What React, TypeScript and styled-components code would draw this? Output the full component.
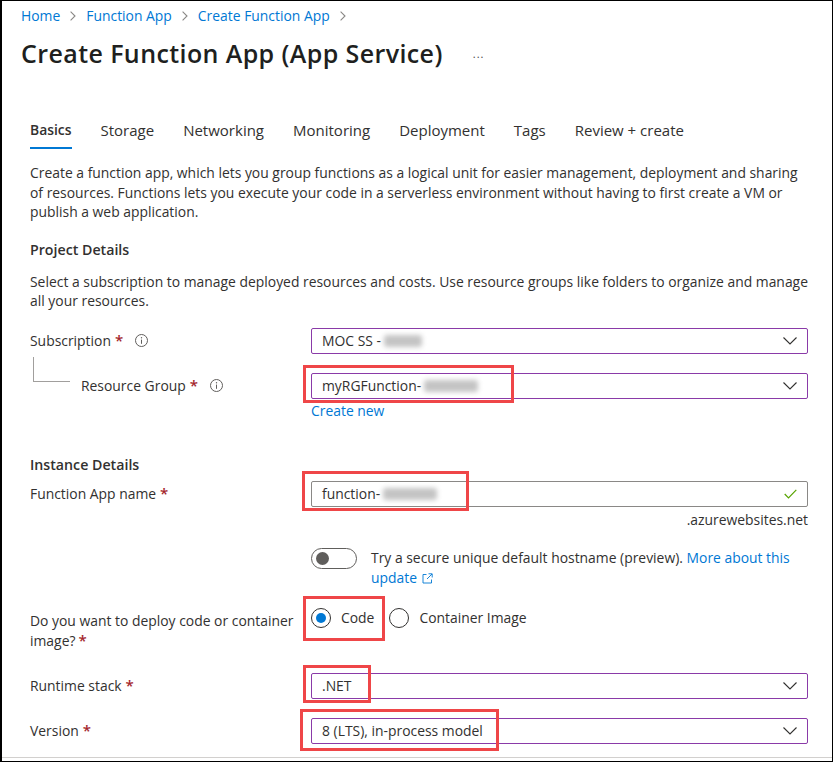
import React from "react";
import styled, { createGlobalStyle } from "styled-components";

const GlobalStyle = createGlobalStyle`
  html, body {
    margin: 0;
    padding: 0;
    background: #ffffff;
  }
  body {
    font-family: "Open Sans", Lato, sans-serif;
    font-size: 13.9px;
    color: #323130;
  }
  * {
    box-sizing: border-box;
  }
`;

const Frame = styled.div`
  width: 833px;
  height: 762px;
  border: 1px solid #000;
  border-left-width: 2px;
  display: flex;
  flex-direction: column;
  overflow: hidden;
`;

const Header = styled.header`
  padding-left: 19px;
`;

const Breadcrumb = styled.nav`
  display: flex;
  align-items: center;
  height: 20px;
  margin-top: 5px;
  gap: 10px;
`;

const Crumb = styled.a`
  color: #0078d4;
  text-decoration: none;
  line-height: 20px;
`;

const TitleRow = styled.div`
  display: flex;
  align-items: center;
  margin-top: 11px;
  height: 32px;
`;

const Title = styled.h1`
  margin: 0;
  font-size: 25px;
  font-weight: 600;
  letter-spacing: 0.4px;
  line-height: 32px;
  color: #201f1e;
`;

const More = styled.span`
  margin-left: 30px;
  color: #484644;
  font-size: 11px;
  letter-spacing: 1px;
  line-height: 12px;
  padding-top: 2px;
`;

const Content = styled.main`
  flex: 1;
  padding: 0 24px 0 28px;
  overflow: hidden;
`;

const Tabs = styled.div`
  display: flex;
  align-items: flex-end;
  gap: 29px;
  margin-top: 51px;
`;

const Tab = styled.div<{ $active?: boolean }>`
  line-height: 20px;
  padding-bottom: 7px;
  font-size: ${(p) => (p.$active ? 13.9 : 15)}px;
  font-weight: ${(p) => (p.$active ? 600 : 400)};
  color: #323130;
  border-bottom: 2px solid ${(p) => (p.$active ? "#0078d4" : "transparent")};
`;

const Text = styled.p<{ $mt: number }>`
  margin: ${(p) => p.$mt}px 0 0;
  line-height: 19.6px;
`;

const SectionTitle = styled.h3<{ $mt: number }>`
  margin: ${(p) => p.$mt}px 0 0;
  font-size: 14.2px;
  font-weight: 600;
  line-height: 20px;
`;

const Row = styled.div<{ $mt: number; $top?: boolean }>`
  display: grid;
  grid-template-columns: 281px 1fr;
  align-items: ${(p) => (p.$top ? "start" : "center")};
  margin-top: ${(p) => p.$mt}px;
`;

const Label = styled.div`
  display: flex;
  align-items: center;
  line-height: 20px;
`;

const TreeLabel = styled(Label)`
  height: 26px;
`;

const WrapLabel = styled.div`
  line-height: 20px;
  padding-top: 3px;
  padding-right: 12px;
`;

const Connector = styled.span`
  align-self: flex-start;
  width: 37px;
  height: 25px;
  margin: -16px 11px 0 3px;
  border-left: 1px solid #a19f9d;
  border-bottom: 1px solid #a19f9d;
`;

const Required = styled.span<{ $gap?: number }>`
  color: #a4262c;
  margin-left: ${(p) => p.$gap ?? 4}px;
  font-size: 15px;
  line-height: 1;
  font-weight: 600;
`;

const Info = styled.svg`
  margin-left: 12px;
  width: 13px;
  height: 13px;
`;

const Control = styled.div`
  position: relative;
`;

const Field = styled.div<{ $purple?: boolean }>`
  height: 26px;
  display: flex;
  align-items: center;
  padding: 0 10px;
  border: 1px solid ${(p) => (p.$purple ? "#8a3aa8" : "#8a8886")};
  border-radius: 2px;
  background: #fff;
`;

const Value = styled.span`
  flex: 1;
  display: flex;
  align-items: center;
  line-height: 20px;
  white-space: nowrap;
`;

const Blur = styled.span<{ $w: number }>`
  display: inline-block;
  width: ${(p) => p.$w}px;
  height: 12px;
  margin-left: 3px;
  background: #c4c4c4;
  border-radius: 3px;
  filter: blur(2.5px);
`;

const Highlight = styled.span<{ $l: number; $t: number; $w: number; $h: number }>`
  position: absolute;
  left: ${(p) => p.$l}px;
  top: ${(p) => p.$t}px;
  width: ${(p) => p.$w}px;
  height: ${(p) => p.$h}px;
  border: 3px solid #ef4648;
  pointer-events: none;
`;

const Link = styled.a`
  color: #0078d4;
  text-decoration: none;
`;

const CreateNew = styled(Link)`
  display: block;
  margin-top: 2px;
  line-height: 20px;
`;

const Suffix = styled.div`
  margin-top: 3px;
  text-align: right;
  line-height: 20px;
`;

const ToggleRow = styled.div`
  display: flex;
  align-items: flex-start;
  gap: 14px;
  margin-top: 18px;
`;

const Toggle = styled.span`
  flex: none;
  width: 46px;
  height: 21px;
  border: 1px solid #605e5c;
  border-radius: 11px;
  display: flex;
  align-items: center;
  padding-left: 4px;
  &::before {
    content: "";
    width: 13px;
    height: 13px;
    border-radius: 50%;
    background: #605e5c;
  }
`;

const ToggleText = styled.div`
  line-height: 20px;
`;

const RadioGroup = styled.div`
  display: flex;
  align-items: center;
  height: 20px;
`;

const RadioOption = styled.label`
  display: flex;
  align-items: center;
  gap: 10px;
  margin-right: 15px;
  line-height: 20px;
`;

const RadioCircle = styled.span<{ $checked?: boolean }>`
  width: 20px;
  height: 20px;
  border-radius: 50%;
  border: 1px solid #323130;
  display: flex;
  align-items: center;
  justify-content: center;
  &::after {
    content: "";
    width: 10px;
    height: 10px;
    border-radius: 50%;
    background: ${(p) => (p.$checked ? "#0078d4" : "transparent")};
  }
`;

const Footer = styled.footer`
  height: 4px;
  border-top: 1px solid #d2d0ce;
`;

const Chevron = () => (
  <svg width="14" height="8" viewBox="0 0 14 8">
    <polyline points="0.5,0.5 7,7 13.5,0.5" fill="none" stroke="#323130" strokeWidth="1.1" />
  </svg>
);

const CrumbChevron = () => (
  <svg width="6" height="10" viewBox="0 0 6 10">
    <polyline points="0.6,0.6 5,5 0.6,9.4" fill="none" stroke="#8a8886" strokeWidth="1.1" />
  </svg>
);

const InfoIcon = () => (
  <Info viewBox="0 0 13 13">
    <circle cx="6.5" cy="6.5" r="6" fill="none" stroke="#605e5c" strokeWidth="1" />
    <circle cx="6.5" cy="3.8" r="0.7" fill="#605e5c" />
    <line x1="6.5" y1="5.6" x2="6.5" y2="9.8" stroke="#605e5c" strokeWidth="1" />
  </Info>
);

const Check = () => (
  <svg width="13" height="10" viewBox="0 0 13 10">
    <polyline points="0.7,5 4.5,8.8 12.3,0.8" fill="none" stroke="#57a300" strokeWidth="1.2" />
  </svg>
);

const ExternalIcon = () => (
  <svg width="11" height="11" viewBox="0 0 11 11" style={{ marginLeft: 5, verticalAlign: -1 }}>
    <path d="M4.5 1.5H1V10H9.5V6.5" fill="none" stroke="#0078d4" strokeWidth="0.9" />
    <path d="M5 6L10 1M6.5 0.8H10.2V4.5" fill="none" stroke="#0078d4" strokeWidth="0.9" />
  </svg>
);

const tabs = ["Basics", "Storage", "Networking", "Monitoring", "Deployment", "Tags", "Review + create"];

export default function App() {
  return (
    <>
      <GlobalStyle />
      <Frame>
        <Header>
          <Breadcrumb>
            <Crumb>Home</Crumb>
            <CrumbChevron />
            <Crumb>Function App</Crumb>
            <CrumbChevron />
            <Crumb>Create Function App</Crumb>
            <CrumbChevron />
          </Breadcrumb>
          <TitleRow>
            <Title>Create Function App (App Service)</Title>
            <More>...</More>
          </TitleRow>
        </Header>

        <Content>
          <Tabs>
            {tabs.map((t, i) => (
              <Tab key={t} $active={i === 0}>
                {t}
              </Tab>
            ))}
          </Tabs>

          <Text $mt={14}>
            Create a function app, which lets you group functions as a logical unit for easier management,
            deployment and sharing of resources. Functions lets you execute your code in a serverless
            environment without having to first create a VM or publish a web application.
          </Text>

          <SectionTitle $mt={18}>Project Details</SectionTitle>
          <Text $mt={12}>
            Select a subscription to manage deployed resources and costs. Use resource groups like folders to
            organize and manage all your resources.
          </Text>

          <Row $mt={17}>
            <Label>
              Subscription<Required>*</Required>
              <InfoIcon />
            </Label>
            <Control>
              <Field $purple>
                <Value>
                  MOC SS - <Blur $w={38} />
                </Value>
                <Chevron />
              </Field>
            </Control>
          </Row>

          <Row $mt={19} $top>
            <TreeLabel>
              <Connector />
              Resource Group<Required>*</Required>
              <InfoIcon />
            </TreeLabel>
            <Control>
              <Field $purple>
                <Value>
                  myRGFunction-<Blur $w={54} />
                </Value>
                <Chevron />
              </Field>
              <Highlight $l={-8} $t={-8} $w={211} $h={38} />
              <CreateNew>Create new</CreateNew>
            </Control>
          </Row>

          <SectionTitle $mt={34}>Instance Details</SectionTitle>

          <Row $mt={6}>
            <Label>
              Function App name<Required>*</Required>
            </Label>
            <Control>
              <Field>
                <Value>
                  function-<Blur $w={54} />
                </Value>
                <Check />
              </Field>
              <Highlight $l={-9} $t={-10} $w={167} $h={40} />
            </Control>
          </Row>
          <Row $mt={0}>
            <span />
            <Suffix>.azurewebsites.net</Suffix>
          </Row>

          <Row $mt={0}>
            <span />
            <ToggleRow>
              <Toggle />
              <ToggleText>
                Try a secure unique default hostname (preview). <Link>More about this update</Link>
                <ExternalIcon />
              </ToggleText>
            </ToggleRow>
          </Row>

          <Row $mt={20} $top>
            <WrapLabel>
              Do you want to deploy code or container image?<Required $gap={3}>*</Required>
            </WrapLabel>
            <Control>
              <RadioGroup>
                <RadioOption>
                  <RadioCircle $checked />
                  Code
                </RadioOption>
                <RadioOption>
                  <RadioCircle />
                  Container Image
                </RadioOption>
              </RadioGroup>
              <Highlight $l={-8} $t={-12} $w={82} $h={45} />
            </Control>
          </Row>

          <Row $mt={22}>
            <Label>
              Runtime stack<Required>*</Required>
            </Label>
            <Control>
              <Field $purple>
                <Value>.NET</Value>
                <Chevron />
              </Field>
              <Highlight $l={-8} $t={-8} $w={68} $h={38} />
            </Control>
          </Row>

          <Row $mt={19}>
            <Label>
              Version<Required>*</Required>
            </Label>
            <Control>
              <Field $purple>
                <Value>8 (LTS), in-process model</Value>
                <Chevron />
              </Field>
              <Highlight $l={-11} $t={-9} $w={199} $h={42} />
            </Control>
          </Row>
        </Content>
        <Footer />
      </Frame>
    </>
  );
}
